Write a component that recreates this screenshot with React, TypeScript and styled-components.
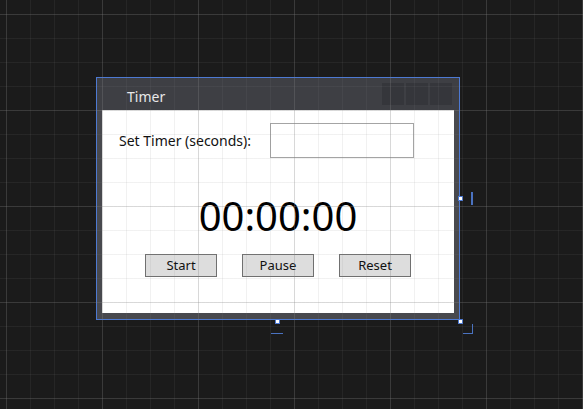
import { useState } from "react";
import styled, { createGlobalStyle } from "styled-components";

const GlobalStyle = createGlobalStyle`
  html, body {
    margin: 0;
    padding: 0;
    width: 583px;
    height: 409px;
    overflow: hidden;
    background: #1b1b1b;
    font-family: "Noto Sans", "Open Sans", sans-serif;
  }
`;

const Canvas = styled.div`
  position: relative;
  width: 583px;
  height: 409px;
`;

const GridOverlay = styled.div`
  position: absolute;
  inset: 0;
  pointer-events: none;
  background-image:
    linear-gradient(to right, rgba(128, 128, 128, 0.22) 1px, transparent 1px),
    linear-gradient(to bottom, rgba(128, 128, 128, 0.22) 1px, transparent 1px),
    linear-gradient(to right, rgba(128, 128, 128, 0.11) 1px, transparent 1px),
    linear-gradient(to bottom, rgba(128, 128, 128, 0.11) 1px, transparent 1px);
  background-size: 96px 96px, 96px 96px, 24px 24px, 24px 24px;
  background-position: 6px 14px, 6px 14px, 6px 14px, 6px 14px;
`;

const Window = styled.div`
  position: absolute;
  left: 96px;
  top: 77px;
  width: 364px;
  height: 243px;
  box-sizing: border-box;
  border: 1px solid #4d79d2;
  background: #48494e;
  display: flex;
  flex-direction: column;
`;

const TitleBar = styled.div`
  height: 32px;
  flex-shrink: 0;
  display: flex;
  align-items: center;
  justify-content: space-between;
  background: #3e3f44;
  padding: 0 7px 0 30px;
`;

const Title = styled.span`
  color: #e8e8e8;
  font-size: 14px;
  padding-top: 5px;
`;

const TitleButtons = styled.div`
  display: flex;
  gap: 2px;
`;

const TitleButton = styled.div`
  width: 22px;
  height: 22px;
  background: #35363b;
`;

const Frame = styled.div`
  flex: 1;
  display: flex;
  padding: 0 5px 6px 5px;
`;

const Content = styled.div`
  flex: 1;
  background: #ffffff;
  display: flex;
  flex-direction: column;
  align-items: center;
`;

const SetRow = styled.div`
  align-self: stretch;
  display: flex;
  align-items: center;
  padding: 13px 0 0 17px;
`;

const Label = styled.label`
  font-size: 14px;
  color: #111;
  width: 151px;
`;

const SecondsInput = styled.input`
  width: 144px;
  height: 35px;
  box-sizing: border-box;
  border: 1px solid #a4a4a4;
  background: transparent;
  outline: none;
  font-family: inherit;
  font-size: 13px;
  padding: 0 6px;
`;

const Clock = styled.div`
  font-size: 40px;
  color: #000;
  line-height: 1;
  margin-top: 38px;
`;

const Buttons = styled.div`
  display: flex;
  gap: 25px;
  margin-top: 18px;
`;

const Button = styled.button`
  width: 72px;
  height: 23px;
  background: #dddddd;
  border: 1px solid #707070;
  font-family: inherit;
  font-size: 13px;
  color: #111;
  padding: 0;
  line-height: 21px;
`;

const Handle = styled.div<{ $x: number; $y: number }>`
  position: absolute;
  left: ${(p) => p.$x}px;
  top: ${(p) => p.$y}px;
  width: 3px;
  height: 3px;
  background: #ffffff;
  border: 1px solid #4d79d2;
`;

const Mark = styled.div<{ $x: number; $y: number; $w: number; $h: number }>`
  position: absolute;
  left: ${(p) => p.$x}px;
  top: ${(p) => p.$y}px;
  width: ${(p) => p.$w}px;
  height: ${(p) => p.$h}px;
  background: #4a72c0;
`;

const format = (total: number) => {
  const h = Math.floor(total / 3600);
  const m = Math.floor((total % 3600) / 60);
  const s = total % 60;
  return [h, m, s].map((n) => String(n).padStart(2, "0")).join(":");
};

const App = () => {
  const [seconds, setSeconds] = useState("");
  const [remaining] = useState(0);

  return (
    <Canvas>
      <GlobalStyle />
      <Window>
        <TitleBar>
          <Title>Timer</Title>
          <TitleButtons>
            <TitleButton />
            <TitleButton />
            <TitleButton />
          </TitleButtons>
        </TitleBar>
        <Frame>
          <Content>
            <SetRow>
              <Label>Set Timer (seconds):</Label>
              <SecondsInput
                value={seconds}
                onChange={(e) => setSeconds(e.target.value)}
              />
            </SetRow>
            <Clock>{format(remaining)}</Clock>
            <Buttons>
              <Button>Start</Button>
              <Button>Pause</Button>
              <Button>Reset</Button>
            </Buttons>
          </Content>
        </Frame>
      </Window>
      <Handle $x={458} $y={196} />
      <Handle $x={275} $y={319} />
      <Handle $x={458} $y={319} />
      <Mark $x={471} $y={192} $w={2} $h={13} />
      <Mark $x={271} $y={333} $w={12} $h={1} />
      <Mark $x={463} $y={333} $w={10} $h={1} />
      <Mark $x={472} $y={324} $w={1} $h={10} />
      <GridOverlay />
    </Canvas>
  );
};

export default App;
